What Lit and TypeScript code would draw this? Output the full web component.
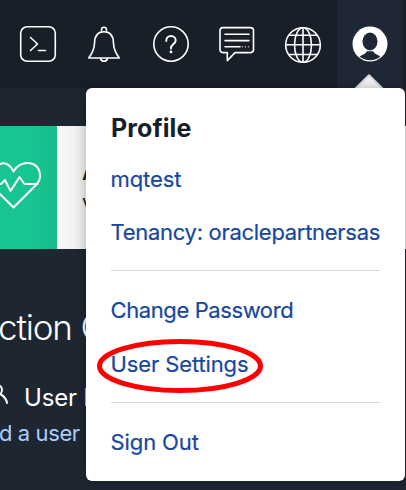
import { LitElement, html, css, svg } from "lit";
import { customElement } from "lit/decorators.js";

const icons = [
  svg`<rect x="20.700" y="26.700" width="34.600" height="34.600" rx="6.500"/><path d="M30.500 37.500 37.500 44 30.500 50.500M38.500 50.500h7"/>`,
  svg`<path d="M88.700 58 Q94.300 50.500 94.500 43.500 C94.500 36 97.500 31.700 104 31.700 S113.500 36 113.500 43.500 Q113.700 50.500 119.300 58Z"/><path d="M101.500 31.500v-1.800a2.500 2.500 0 0 1 5 0v1.800M100.500 58.500a3.600 3.600 0 0 0 7 0"/>`,
  svg`<circle cx="171" cy="44" r="17.200"/><path stroke-width="1.900" d="M166.300 41v-.6a4.700 4.400 0 0 1 9.400 0c0 3.600-4.700 3.600-4.700 7.600v.500"/><circle class="dot" cx="171" cy="51.900" r="1.400"/>`,
  svg`<path d="M223 27.600h27.500a3 3 0 0 1 3 3v19a3 3 0 0 1-3 3H235l-7.700 8v-8H223a3 3 0 0 1-3-3v-19a3 3 0 0 1 3-3Z"/><path d="M225 34.200h24M225 40.600h24M225 46.800h15"/><path stroke-width="1.200" d="M242.300 46.800h.1M245.300 46.800h.1M248.300 46.800h.1"/>`,
  svg`<circle cx="303" cy="45" r="17.300"/><ellipse cx="303" cy="45" rx="8.500" ry="17.300"/><path d="M303 28v34M285.700 44.700h34.600M289.500 35.300h27M289.500 54.500h27"/>`,
];

@customElement("app-root")
export class AppRoot extends LitElement {
  static styles = css`
    :host { display: block; position: relative; width: 406px; height: 490px; overflow: hidden;
      background: #1e2632; font-family: Inter, "Liberation Sans", sans-serif; color: #fff; }
    .bar { height: 88px; background: #181f28; display: flex; justify-content: flex-end; }
    .active { width: 66px; margin-right: 3px; background: #1f2634; }
    .icons { position: absolute; left: 0; top: 0; fill: none; stroke: #fff; stroke-width: 1.600; stroke-linecap: round; stroke-linejoin: round; }
    .dot, .solid { fill: #fff; stroke: none; }
    .head { fill: #1f2634; stroke: none; }
    .arrow { fill: #f5f5f6; stroke: #d9d9df; stroke-width: 2; }
    .banner { margin-top: 38px; height: 123px; display: flex; background: linear-gradient(90deg, #f8f8f9 57px, #ebeced 86px); }
    .green { width: 57px; background: linear-gradient(90deg, #18c592 30px, #17bd8b); }
    .alert { padding: 33px 0 0 25px; font-size: 20px; line-height: 28px; font-weight: 600; color: #222; }
    .line { white-space: nowrap; }
    .second { margin-top: 1px; font-weight: 400; }
    .title { margin: 54px 0 0 -2px; font-size: 35px; line-height: 48px; font-weight: 300; letter-spacing: -1.150px; white-space: nowrap; }
    .user { margin: 33px 0 0 24px; font-size: 24px; line-height: 28px; letter-spacing: -.2px; white-space: nowrap; }
    .add { margin: 7px 0 0 -1px; font-size: 22px; line-height: 28px; letter-spacing: -.4px; color: #a9cdfa; white-space: nowrap; }
    .menu { position: absolute; left: 86px; top: 88px; width: 319px; height: 393px; box-sizing: border-box; padding: 25px; border-radius: 6px;
      background: #fff; color: #17479e; display: flex; flex-direction: column; box-shadow: 0 0 12px #0004; font-size: 22px; line-height: 28px; white-space: nowrap; -webkit-text-stroke: .2px #17479e; }
    h2 { margin: 0; font-size: 25px; line-height: 30px; letter-spacing: .1px; color: #161e28; -webkit-text-stroke: 0; }
    .item { width: max-content; margin-left: -.5px; letter-spacing: -.29px; }
    .name { margin-top: 22px; letter-spacing: -.1px; }
    .tenancy { margin-top: 25px; }
    .password { letter-spacing: -.4px; }
    hr { width: 269px; height: 1px; border: 0; background: #d8d9dd; margin: 24px 0 25px; flex: none; }
    .settings { margin-top: 26px; letter-spacing: -.12px; }
    .signout { letter-spacing: -.1px; }
    .overlay { position: absolute; left: 0; top: 0; }
  `;
  render() {
    return html`
      <div class="bar"><div class="active"></div></div>
      <div class="banner"><div class="green"></div><div class="alert"><div class="line">A</div><div class="line second">v</div></div></div>
      <div class="title">ction C</div><div class="user">User I</div><div class="add">d a user</div>
      <svg class="icons" width="406" height="490">
        ${icons}
        <circle class="solid" cx="370" cy="44" r="17.500"/>
        <ellipse class="head" cx="370" cy="41.500" rx="7.500" ry="9"/>
        <path class="head" d="M366.800 51.300h6.400q1 2.200 3.500 3.200 2.300 1 3.600 2-4 3.800-10.300 3.800t-10.300-3.800q1.300-1 3.600-2 2.500-1 3.500-3.200Z"/>
        <path class="arrow" d="M355 89 369 75.300 383 89"/>
        <path stroke-width="2" d="M0 164Q8 161 13.500 171.500C19 160 40 159 40 176Q40 182 34 187L13.500 207.500 0 194M0 184h1l4-4 5.500 11 9-14 5 7h13"/>
        <path stroke-width="2" d="M-3 395a5 5 0 1 0 0-10M0 394q6 3 7 9"/>
      </svg>
      <div class="menu"><h2>Profile</h2><div class="item name">mqtest</div><div class="item tenancy">Tenancy: oraclepartnersas</div><hr>
        <div class="item password">Change Password</div><div class="item settings">User Settings</div><hr><div class="item signout">Sign Out</div></div>
      <svg class="overlay" width="406" height="490"><ellipse cx="180" cy="366" rx="80.500" ry="24.500" fill="none" stroke="#f00" stroke-width="5"/></svg>`;
  }
}
